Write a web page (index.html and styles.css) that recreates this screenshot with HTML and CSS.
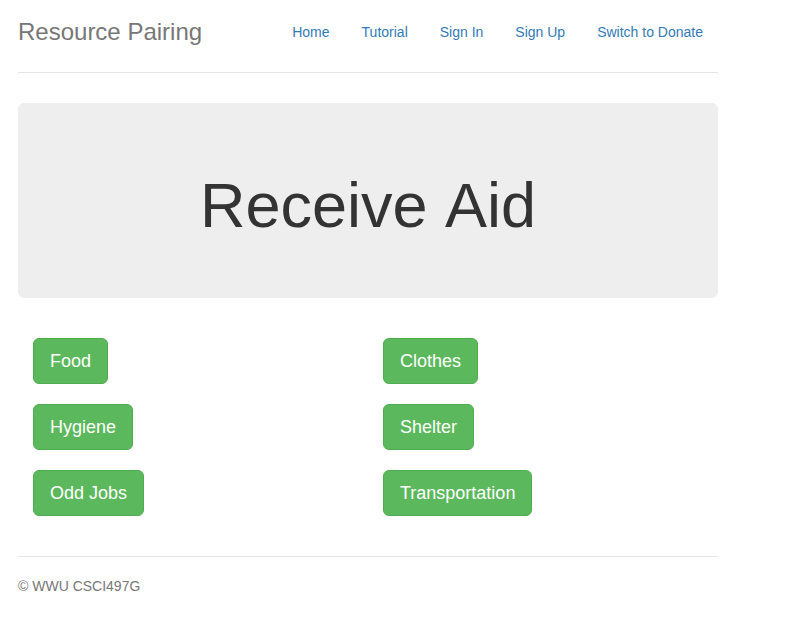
FILE: index.html
```html
<!DOCTYPE html>
<html lang="en">
<head>
<meta charset="utf-8">
<meta name="viewport" content="width=device-width, initial-scale=1">
<title>Resource Pairing</title>
<link rel="stylesheet" href="styles.css">
</head>
<body>
<div class="container">
  <header class="header">
    <h3 class="brand">Resource Pairing</h3>
    <nav>
      <ul class="nav">
        <li><a href="#">Home</a></li>
        <li><a href="#">Tutorial</a></li>
        <li><a href="#">Sign In</a></li>
        <li><a href="#">Sign Up</a></li>
        <li><a href="#">Switch to Donate</a></li>
      </ul>
    </nav>
  </header>
  <main>
    <section class="jumbotron">
      <h1>Receive Aid</h1>
    </section>
    <section class="categories">
      <div class="column">
        <button class="btn" type="button">Food</button>
        <button class="btn" type="button">Hygiene</button>
        <button class="btn" type="button">Odd Jobs</button>
      </div>
      <div class="column">
        <button class="btn" type="button">Clothes</button>
        <button class="btn" type="button">Shelter</button>
        <button class="btn" type="button">Transportation</button>
      </div>
    </section>
  </main>
  <footer class="footer">© WWU CSCI497G</footer>
</div>
</body>
</html>
```
FILE: styles.css
```css
* {
  box-sizing: border-box;
}

body {
  margin: 0;
  padding: 20px 18px;
  background: #fff;
  color: #333;
  font-family: "Liberation Sans", Arial, sans-serif;
  font-size: 14px;
  line-height: 20px;
}

.container {
  max-width: 700px;
}

.header {
  display: flex;
  justify-content: space-between;
  align-items: flex-start;
  margin-bottom: 30px;
  padding-bottom: 28px;
  border-bottom: 1px solid #e5e5e5;
}

.brand {
  margin: 0;
  color: #777;
  font-size: 24px;
  font-weight: 500;
  line-height: 24px;
}

.nav {
  display: flex;
  gap: 2px;
  margin: -8px 0;
  padding: 0;
  list-style: none;
}

.nav a {
  display: block;
  padding: 10px 15px;
  border-radius: 4px;
  color: #337ab7;
  text-decoration: none;
}

.nav a:hover {
  background: #eee;
}

.jumbotron {
  padding: 68px 60px 58px;
  border-radius: 6px;
  background: #eee;
  text-align: center;
}

.jumbotron h1 {
  margin: 0;
  font-size: 63px;
  font-weight: 500;
  line-height: 69px;
  font-kerning: none;
}

.categories {
  display: grid;
  grid-template-columns: 1fr 1fr;
  margin: 40px 0;
}

.column {
  display: flex;
  flex-direction: column;
  align-items: flex-start;
  gap: 20px;
  padding: 0 15px;
}

.btn {
  padding: 10px 16px;
  border: 1px solid #4cae4c;
  border-radius: 6px;
  background: #5cb85c;
  color: #fff;
  font-family: inherit;
  font-size: 18px;
  line-height: 24px;
  cursor: pointer;
}

.btn:hover {
  background: #449d44;
}

.footer {
  padding-top: 19px;
  border-top: 1px solid #e5e5e5;
  color: #777;
}
```
